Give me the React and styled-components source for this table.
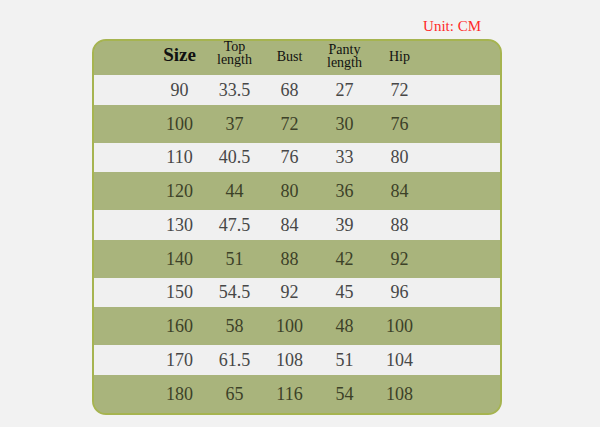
import React from "react";
import styled, { createGlobalStyle } from "styled-components";

const Global = createGlobalStyle`
  html, body { margin: 0; padding: 0; background: #f2f2f2; }
  body { font-family: "Liberation Serif", "Times New Roman", serif; }
`;

const Page = styled.div`
  width: 600px;
  height: 427px;
  box-sizing: border-box;
  padding: 17px 0 0 92px;
  background: #f2f2f2;
`;

const Wrap = styled.div`
  width: 410px;
  display: flex;
  flex-direction: column;
`;

const Unit = styled.div`
  align-self: flex-end;
  margin-right: 21px;
  margin-bottom: 4px;
  font-size: 15px;
  line-height: 18px;
  color: #ff2a2a;
`;

const Table = styled.div`
  box-sizing: border-box;
  width: 410px;
  border: 2px solid #a6b450;
  border-radius: 14px;
  overflow: hidden;
  background: #a9b47c;
`;

const HeaderRow = styled.div`
  height: 34px;
  display: flex;
  align-items: flex-start;
  padding-left: 58px;
  background: #a9b47c;
`;

const HeadCell = styled.div`
  width: 55px;
  text-align: center;
  margin-top: ${(p) => p.$offset}px;
  font-size: ${(p) => (p.$big ? 19 : 14)}px;
  font-weight: ${(p) => (p.$big ? 700 : 400)};
  line-height: ${(p) => (p.$big ? 19 : 13)}px;
  color: #111;
`;

const Row = styled.div`
  height: ${(p) => (p.$light ? 29.5 : 38)}px;
  display: flex;
  align-items: center;
  padding-left: 58px;
  background: ${(p) => (p.$light ? "#f0f0f0" : "#a9b47c")};
  color: ${(p) => (p.$light ? "#474747" : "#3c4128")};
`;

const Cell = styled.div`
  width: 55px;
  text-align: center;
  font-size: 18px;
  line-height: 20px;
`;

const data = [
  ["90", "33.5", "68", "27", "72"],
  ["100", "37", "72", "30", "76"],
  ["110", "40.5", "76", "33", "80"],
  ["120", "44", "80", "36", "84"],
  ["130", "47.5", "84", "39", "88"],
  ["140", "51", "88", "42", "92"],
  ["150", "54.5", "92", "45", "96"],
  ["160", "58", "100", "48", "100"],
  ["170", "61.5", "108", "51", "104"],
  ["180", "65", "116", "54", "108"],
];

export default function App() {
  return (
    <>
      <Global />
      <Page>
        <Wrap>
          <Unit>Unit: CM</Unit>
          <Table>
            <HeaderRow>
              <HeadCell $big $offset={4}>Size</HeadCell>
              <HeadCell $offset={-1.5}>Top<br />length</HeadCell>
              <HeadCell $offset={8.8}>Bust</HeadCell>
              <HeadCell $offset={1.5}>Panty<br />length</HeadCell>
              <HeadCell $offset={8.8}>Hip</HeadCell>
            </HeaderRow>
            {data.map((r, i) => (
              <Row key={r[0]} $light={i % 2 === 0}>
                {r.map((v, j) => (
                  <Cell key={j}>{v}</Cell>
                ))}
              </Row>
            ))}
          </Table>
        </Wrap>
      </Page>
    </>
  );
}
